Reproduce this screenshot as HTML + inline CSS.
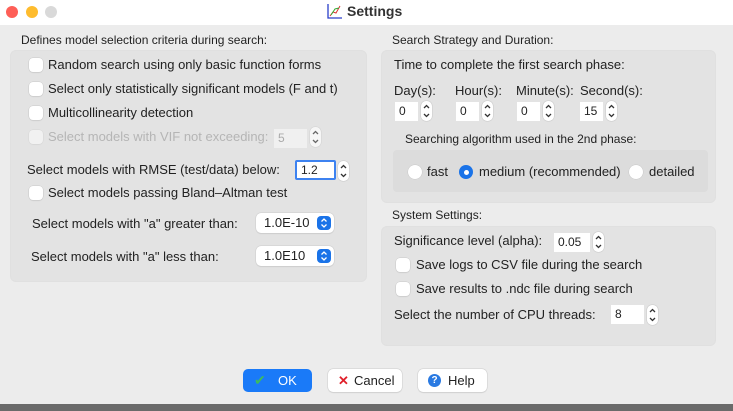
<!DOCTYPE html>
<html><head><style>
body{margin:0;width:733px;height:411px;overflow:hidden;background:#ececec;font-family:"Liberation Sans",sans-serif;font-size:13px;color:#222;position:relative}
.a{position:absolute;white-space:nowrap}
.box{position:absolute;background:#e3e3e3;border-radius:6px;border:1px solid #e0e0e0}
.cb{position:absolute;width:14px;height:14px;background:#fff;border-radius:4px;box-shadow:0 0 0 0.5px #c8c8c8,0 1px 1px rgba(0,0,0,.08)}
.in{position:absolute;background:#fff;height:19px;font-size:12px;line-height:19px;padding-left:4px;box-sizing:border-box}
.st{position:absolute;width:11px;height:20px;background:#fff;border-radius:5px;box-shadow:0 0 0 0.5px #c8c8c8}
.sel{position:absolute;background:#fff;border-radius:5px;box-shadow:0 0 0 0.5px #ccc,0 1px 1px rgba(0,0,0,.1);height:20px;line-height:20px;padding-left:8px;box-sizing:border-box}
.sel i{position:absolute;right:3px;top:3px;width:14px;height:14px;background:#1a73e8;border-radius:4px}
.rd{position:absolute;width:14px;height:14px;border-radius:50%;background:#fff;box-shadow:0 0 0 0.5px #c8c8c8}
.btn{position:absolute;top:369px;height:23px;border-radius:5px;background:#fff;box-shadow:0 0 0 0.5px #ccc,0 1px 1px rgba(0,0,0,.1);line-height:23px;font-size:13px}
.sm{font-size:12px}
svg.c{position:absolute;left:0;top:0}
</style></head><body>
<div class="a" style="left:0;top:0;width:733px;height:25px;background:#fff"></div>
<div class="a" style="left:6px;top:6px;width:12px;height:12px;border-radius:50%;background:#fe5f57"></div>
<div class="a" style="left:26px;top:6px;width:12px;height:12px;border-radius:50%;background:#febc2e"></div>
<div class="a" style="left:45px;top:6px;width:12px;height:12px;border-radius:50%;background:#d9d9d9"></div>
<svg class="a" style="left:327px;top:3px" width="16" height="16"><path d="M1 1V15H15" stroke="#2a3fc9" fill="none" stroke-width="1.3"/><path d="M3 13L6 9L9 10L13 3" stroke="#d33" fill="none"/><path d="M4 12L8 6L12 5" stroke="#3a3" fill="none"/></svg>
<div class="a" style="left:347px;top:3px;font-weight:bold;font-size:14px;color:#333">Settings</div>
<div class="a" style="left:0;top:404px;width:733px;height:7px;background:#6a6a6a"></div>

<div class="a sm" style="left:21px;top:33px">Defines model selection criteria during search:</div>
<div class="box" style="left:10px;top:50px;width:355px;height:230px"></div>
<div class="cb" style="left:29px;top:58px"></div><div class="a" style="left:48px;top:57px">Random search using only basic function forms</div>
<div class="cb" style="left:29px;top:82px"></div><div class="a" style="left:48px;top:81px">Select only statistically significant models (F and t)</div>
<div class="cb" style="left:29px;top:106px"></div><div class="a" style="left:48px;top:105px">Multicollinearity detection</div>
<div class="cb" style="left:29px;top:130px;opacity:.5"></div><div class="a" style="left:48px;top:129px;color:#b5b5b5">Select models with VIF not exceeding:</div>
<div class="in" style="left:274px;top:129px;width:33px;background:#f0f0f0;color:#aaa">5</div><div class="st" style="left:310px;top:127px;opacity:.7"><svg class="c" width="11" height="20"><path d="M3 7L5.5 4.5L8 7M3 13L5.5 15.5L8 13" stroke="#333" fill="none" stroke-width="1.3"/></svg></div>
<div class="a" style="left:27px;top:162px">Select models with RMSE (test/data) below:</div>
<div class="in" style="left:295px;top:160px;width:41px;height:20px;border:2px solid #3d82f0;border-radius:2px;line-height:16px">1.2</div><div class="st" style="left:338px;top:161px"><svg class="c" width="11" height="20"><path d="M3 7L5.5 4.5L8 7M3 13L5.5 15.5L8 13" stroke="#333" fill="none" stroke-width="1.3"/></svg></div>
<div class="cb" style="left:29px;top:186px"></div><div class="a" style="left:48px;top:185px">Select models passing Bland–Altman test</div>
<div class="a" style="left:32px;top:216px">Select models with "a" greater than:</div>
<div class="sel" style="left:256px;top:213px;width:78px">1.0E-10<i><svg class="c" width="14" height="14"><path d="M4.5 5.5L7 3L9.5 5.5M4.5 8.5L7 11L9.5 8.5" stroke="#fff" fill="none" stroke-width="1.3"/></svg></i></div>
<div class="a" style="left:31px;top:249px">Select models with "a" less than:</div>
<div class="sel" style="left:256px;top:246px;width:78px">1.0E10<i><svg class="c" width="14" height="14"><path d="M4.5 5.5L7 3L9.5 5.5M4.5 8.5L7 11L9.5 8.5" stroke="#fff" fill="none" stroke-width="1.3"/></svg></i></div>

<div class="a sm" style="left:392px;top:33px">Search Strategy and Duration:</div>
<div class="box" style="left:381px;top:50px;width:333px;height:151px"></div>
<div class="a" style="left:394px;top:57px">Time to complete the first search phase:</div>
<div class="a" style="left:394px;top:83px">Day(s):</div><div class="a" style="left:455px;top:83px">Hour(s):</div><div class="a" style="left:516px;top:83px">Minute(s):</div><div class="a" style="left:580px;top:83px">Second(s):</div>
<div class="in" style="left:395px;top:102px;width:23px">0</div><div class="st" style="left:421px;top:101px"><svg class="c" width="11" height="20"><path d="M3 7L5.5 4.5L8 7M3 13L5.5 15.5L8 13" stroke="#333" fill="none" stroke-width="1.3"/></svg></div>
<div class="in" style="left:456px;top:102px;width:23px">0</div><div class="st" style="left:482px;top:101px"><svg class="c" width="11" height="20"><path d="M3 7L5.5 4.5L8 7M3 13L5.5 15.5L8 13" stroke="#333" fill="none" stroke-width="1.3"/></svg></div>
<div class="in" style="left:517px;top:102px;width:23px">0</div><div class="st" style="left:543px;top:101px"><svg class="c" width="11" height="20"><path d="M3 7L5.5 4.5L8 7M3 13L5.5 15.5L8 13" stroke="#333" fill="none" stroke-width="1.3"/></svg></div>
<div class="in" style="left:580px;top:102px;width:23px">15</div><div class="st" style="left:606px;top:101px"><svg class="c" width="11" height="20"><path d="M3 7L5.5 4.5L8 7M3 13L5.5 15.5L8 13" stroke="#333" fill="none" stroke-width="1.3"/></svg></div>
<div class="a sm" style="left:405px;top:132px">Searching algorithm used in the 2nd phase:</div>
<div class="a" style="left:393px;top:150px;width:315px;height:42px;background:#dcdcdc;border-radius:4px"></div>
<div class="rd" style="left:408px;top:165px"></div><div class="a" style="left:427px;top:164px">fast</div>
<div class="rd" style="left:459px;top:165px;background:#1a73e8;box-shadow:none"></div><div class="a" style="left:464px;top:170px;width:5px;height:5px;border-radius:50%;background:#fff"></div><div class="a" style="left:479px;top:164px">medium (recommended)</div>
<div class="rd" style="left:629px;top:165px"></div><div class="a" style="left:649px;top:164px">detailed</div>

<div class="a sm" style="left:392px;top:208px">System Settings:</div>
<div class="box" style="left:381px;top:226px;width:333px;height:118px"></div>
<div class="a" style="left:394px;top:233px">Significance level (alpha):</div>
<div class="in" style="left:554px;top:233px;width:36px">0.05</div><div class="st" style="left:593px;top:232px"><svg class="c" width="11" height="20"><path d="M3 7L5.5 4.5L8 7M3 13L5.5 15.5L8 13" stroke="#333" fill="none" stroke-width="1.3"/></svg></div>
<div class="cb" style="left:396px;top:258px"></div><div class="a" style="left:416px;top:257px">Save logs to CSV file during the search</div>
<div class="cb" style="left:396px;top:282px"></div><div class="a" style="left:416px;top:281px">Save results to .ndc file during search</div>
<div class="a" style="left:394px;top:307px">Select the number of CPU threads:</div>
<div class="in" style="left:611px;top:305px;width:33px">8</div><div class="st" style="left:647px;top:305px"><svg class="c" width="11" height="20"><path d="M3 7L5.5 4.5L8 7M3 13L5.5 15.5L8 13" stroke="#333" fill="none" stroke-width="1.3"/></svg></div>

<div class="btn" style="left:243px;width:69px;background:#1a7af8;color:#fff;box-shadow:none"><span style="position:absolute;left:11px;color:#3dbb5e;font-size:14px">✔</span><span style="position:absolute;left:35px">OK</span></div>
<div class="btn" style="left:328px;width:74px"><span style="position:absolute;left:10px;color:#e0202a;font-weight:bold">✕</span><span style="position:absolute;left:26px">Cancel</span></div>
<div class="btn" style="left:418px;width:69px"><span style="position:absolute;left:10px;top:5px;width:13px;height:13px;border-radius:50%;background:#2a7ae2;color:#fff;font-size:10px;line-height:13px;text-align:center;font-weight:bold">?</span><span style="position:absolute;left:30px">Help</span></div>
</body></html>
